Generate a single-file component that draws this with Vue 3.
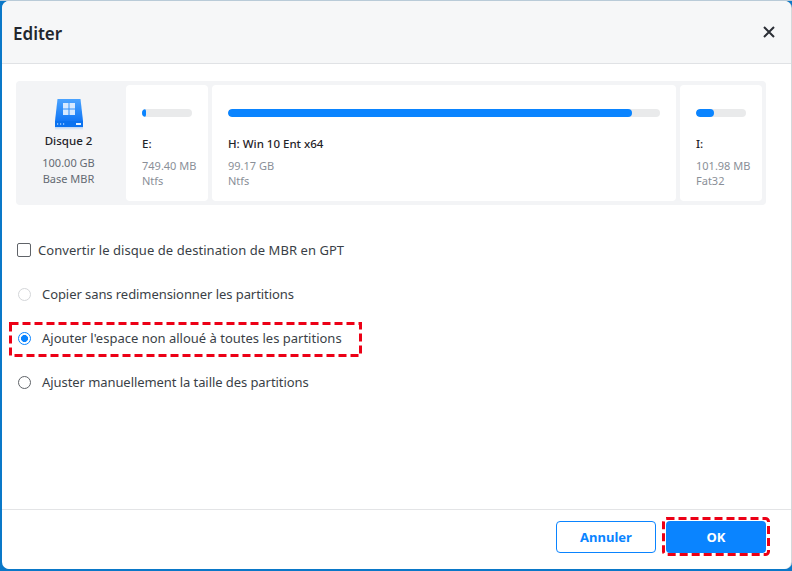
<script setup>
const partitions = [
  { name: 'E:', size: '749.40 MB', fs: 'Ntfs', fill: 8, cls: 'small' },
  { name: 'H: Win 10 Ent x64', size: '99.17 GB', fs: 'Ntfs', fill: 93.6, cls: 'wide' },
  { name: 'I:', size: '101.98 MB', fs: 'Fat32', fill: 36, cls: 'small' },
]
const options = [
  { label: 'Copier sans redimensionner les partitions', state: 'disabled', tight: true },
  { label: "Ajouter l'espace non alloué à toutes les partitions", state: 'checked', mark: true },
  { label: 'Ajuster manuellement la taille des partitions', state: 'normal', tight: true },
]
</script>

<template>
  <div class="screen">
    <div class="dialog">
      <header class="head">
        <h1>Editer</h1>
        <svg class="close" width="12" height="12" viewBox="0 0 12 12"><path d="M1 1l10 10M11 1L1 11" stroke="#2b2f36" stroke-width="2" fill="none"/></svg>
      </header>
      <main class="body">
        <section class="disk">
          <div class="info">
            <svg class="hdd" width="30" height="32" viewBox="0 0 30 32">
              <defs>
                <linearGradient id="g" x1="0" y1="0" x2="0" y2="1"><stop offset="0" stop-color="#4aa3ff"/><stop offset="1" stop-color="#1277f5"/></linearGradient>
                <linearGradient id="s" x1="0" y1="0" x2="0" y2="1"><stop offset="0" stop-color="#0a72f0" stop-opacity=".25"/><stop offset="1" stop-color="#0a72f0" stop-opacity="0"/></linearGradient>
              </defs>
              <path d="M3.500 1h23L29 23H1z" fill="url(#g)"/>
              <rect x="1" y="23" width="28" height="6" fill="#0a72f0"/>
              <rect x="1" y="29" width="28" height="3" fill="url(#s)"/>
              <rect x="9" y="5" width="5.500" height="5.500" fill="#d6e9ff"/><rect x="15.500" y="5" width="5.500" height="5.500" fill="#d6e9ff"/>
              <rect x="9" y="11.500" width="5.500" height="5.500" fill="#d6e9ff"/><rect x="15.500" y="11.500" width="5.500" height="5.500" fill="#d6e9ff"/>
              <rect x="22" y="25" width="5" height="2" fill="#e6f1ff"/>
              <path d="M3 25h1.200v2H3zM6 25h1.200v2H6zM9 25h1.200v2H9z" fill="#7db9ff"/>
            </svg>
            <div class="disk-name">Disque 2</div>
            <div class="disk-meta">100.00 GB</div>
            <div class="disk-meta">Base MBR</div>
          </div>
          <div v-for="p in partitions" :key="p.name" class="part" :class="p.cls">
            <div class="track"><div class="fill" :style="{ width: p.fill + '%' }"></div></div>
            <div class="p-name">{{ p.name }}</div>
            <div class="p-meta">{{ p.size }}</div>
            <div class="p-meta">{{ p.fs }}</div>
          </div>
        </section>

        <label class="check-row"><span class="box"></span>Convertir le disque de destination de MBR en GPT</label>

        <div class="options">
          <div v-for="o in options" :key="o.label" class="option" :class="{ tight: o.tight }">
            <span class="radio" :class="o.state"></span>
            <span>{{ o.label }}</span>
            <svg v-if="o.mark" class="mark" width="353" height="35" viewBox="0 0 353 35"><rect x="1.500" y="1.500" width="350" height="32" fill="none" stroke="#ec0016" stroke-width="3" stroke-dasharray="8 4"/></svg>
          </div>
        </div>
      </main>
      <footer class="foot">
        <button class="btn ghost">Annuler</button>
        <button class="btn primary">OK<svg class="mark-ok" width="108" height="39" viewBox="0 0 108 39"><rect x="1.500" y="1.500" width="105" height="36" rx="3" fill="none" stroke="#ec0016" stroke-width="3" stroke-dasharray="8 4"/></svg></button>
      </footer>
    </div>
  </div>
</template>

<style>
html, body { margin: 0; background: #0a78c8; }
</style>

<style scoped>
.screen { width: 792px; height: 571px; box-sizing: border-box; padding: 1px 1px 2px 2px; background: #0a78c8; box-shadow: inset 0 1px 0 #b9cbd8; font-family: "Noto Sans", "Open Sans", sans-serif; color: #2b2f36; overflow: hidden; }
.dialog { height: 100%; display: flex; flex-direction: column; background: #fff; border-radius: 7px; overflow: hidden; box-shadow: 1px 0 0 #d5d8db; }
.head { height: 63px; flex: none; box-sizing: border-box; display: flex; align-items: center; justify-content: space-between; padding: 0 16px 0 11px; background: #f6f7f8; border-bottom: 1px solid #e0e2e5; }
h1 { margin: 0; padding-top: 3px; font-size: 17px; font-weight: 600; color: #23272e; }
.close { display: block; }
.body { flex: 1; padding: 17px 25px 0 14px; }
.disk { display: flex; gap: 4px; padding: 4px; height: 124px; box-sizing: border-box; background: #f3f4f6; border-radius: 4px; }
.info { width: 102px; flex: none; display: flex; flex-direction: column; align-items: center; padding: 13px 5px 0 0; box-sizing: border-box; }
.hdd { display: block; }
.disk-name { font-size: 11.500px; font-weight: 500; color: #1f2329; line-height: 16px; margin-top: 3px; margin-bottom: 6px; }
.disk-meta { font-size: 11px; line-height: 16px; color: #646a73; }
.part { background: #fff; border-radius: 4px; padding: 24px 16px 0; box-sizing: border-box; }
.small { width: 82px; flex: none; }
.wide { flex: 1; }
.track { height: 8px; border-radius: 4px; background: #e9eaeb; overflow: hidden; }
.fill { height: 100%; border-radius: 4px; background: #0a84ff; }
.p-name { font-size: 11.500px; font-weight: 500; color: #1f2329; line-height: 16px; margin-top: 19px; margin-bottom: 6px; white-space: nowrap; }
.p-meta { font-size: 11px; line-height: 15px; color: #8a8f98; white-space: nowrap; }
.check-row { display: flex; align-items: center; gap: 7px; margin: 35px 0 0 1px; height: 20px; font-size: 13px; letter-spacing: 0.06px; color: #3a3f47; }
.box { width: 12px; height: 12px; border: 1px solid #5f6368; border-radius: 2px; flex: none; }
.options { display: flex; flex-direction: column; gap: 24px; margin-top: 24px; }
.option { position: relative; display: flex; align-items: center; gap: 11px; height: 20px; padding-left: 2px; font-size: 13px; color: #3a3f47; }
.tight { letter-spacing: -0.07px; }
.radio { width: 13px; height: 13px; box-sizing: border-box; border-radius: 50%; border: 1.500px solid #5f6368; flex: none; background: #fff; }
.radio.disabled { border-color: #d4d6d9; }
.radio.checked { border-color: #0a84ff; background: radial-gradient(circle, #0a84ff 0 3.200px, #fff 3.800px); }
.mark { position: absolute; left: -7px; top: -6px; pointer-events: none; }
.foot { height: 60px; flex: none; box-sizing: border-box; border-top: 1px solid #e3e4e6; display: flex; justify-content: flex-end; align-items: center; gap: 10px; padding: 0 25px 5px 0; }
.btn { position: relative; width: 100px; height: 32px; border-radius: 4px; font-family: inherit; font-size: 13px; font-weight: 700; padding: 0; }
.ghost { background: #fff; border: 1px solid #0a84ff; color: #0a84ff; }
.primary { background: #0a84ff; border: 0; color: #fff; }
.mark-ok { position: absolute; left: -4px; top: -4px; pointer-events: none; }
</style>
